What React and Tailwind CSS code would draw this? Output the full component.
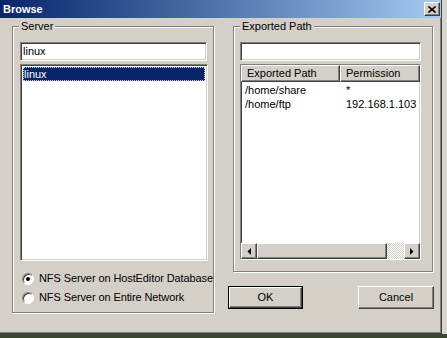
export default function App() {
  const raised =
    "border border-t-white border-l-white border-b-[#404040] border-r-[#404040] shadow-[inset_-1px_-1px_0_#808080] bg-[#d4d0c8]";
  const sunken =
    "border border-t-[#808080] border-l-[#808080] border-b-white border-r-white shadow-[inset_1px_1px_0_#404040,inset_-1px_-1px_0_#d4d0c8]";
  const group =
    "relative border border-[#808080] shadow-[inset_1px_1px_0_#fff,1px_1px_0_#fff]";

  const Radio = ({ checked, label }) => (
    <div className="flex items-center h-[19px] pl-[2px]">
      <div className="relative w-[12px] h-[12px] rounded-full bg-white border border-t-[#808080] border-l-[#808080] border-b-white border-r-white shadow-[inset_1px_1px_0_#404040] flex items-center justify-center">
        {checked && <div className="w-[4px] h-[4px] rounded-full bg-black" />}
      </div>
      <span className="ml-[5px] whitespace-nowrap tracking-[-0.1px]">{label}</span>
    </div>
  );

  const Arrow = ({ dir }) => (
    <svg width="4" height="7" viewBox="0 0 4 7">
      {dir === "left" ? (
        <polygon points="4,0 4,7 0.5,3.5" fill="#000" />
      ) : (
        <polygon points="0,0 0,7 3.5,3.5" fill="#000" />
      )}
    </svg>
  );

  return (
    <div className="w-[447px] h-[338px] flex flex-col bg-[#3b4630] font-['Liberation_Sans',Arial,sans-serif] text-[11px] text-black overflow-hidden">
      <div className="flex h-[334px]">
        <div className="w-[442px] h-full bg-[#d4d0c8] border-r border-b border-r-[#404040] border-b-[#404040] shadow-[inset_-1px_-1px_0_#808080] flex flex-col">
          {/* Title bar */}
          <div className="h-[18px] flex items-center justify-between bg-linear-to-r from-[#0a246a] to-[#a6caf0] pl-[3px] pr-[1px]">
            <span className="text-white font-bold text-[11px]">Browse</span>
            <div className={`${raised} w-[16px] h-[14px] flex items-center justify-center`}>
              <svg width="8" height="7" viewBox="0 0 8 7">
                <path d="M0.5 0.5 L7.5 6.5 M7.5 0.5 L0.5 6.5" stroke="#000" strokeWidth="1.6" />
              </svg>
            </div>
          </div>

          {/* Body */}
          <div className="flex pl-[12px] pt-[8px]">
            {/* Server group */}
            <div className={`${group} w-[202px] h-[287px] pt-[15px] pl-[7px]`}>
              <span className="absolute left-[6px] top-[-7px] px-[2px] bg-[#d4d0c8] leading-[13px]">
                Server
              </span>
              <div className={`${sunken} bg-white w-[187px] h-[19px] flex items-center pl-[2px]`}>
                linux
              </div>
              <div className={`${sunken} bg-white w-[188px] h-[197px] mt-[3px] p-[2px]`}>
                <div className="h-[14px] bg-[#0a246a] text-white flex items-center pl-[1px] outline outline-1 outline-dotted outline-[#d4d0c8] -outline-offset-1">
                  linux
                </div>
              </div>
              <div className="mt-[8px] flex flex-col">
                <Radio checked label="NFS Server on HostEditor Database" />
                <Radio label="NFS Server on Entire Network" />
              </div>
            </div>

            {/* Right column */}
            <div className="ml-[14px] flex flex-col">
              <div className={`${group} ml-[5px] w-[200px] h-[246px] pt-[15px] pl-[6px]`}>
                <span className="absolute left-[6px] top-[-7px] px-[2px] bg-[#d4d0c8] leading-[13px]">
                  Exported Path
                </span>
                <div className={`${sunken} bg-white w-[181px] h-[19px]`} />
                <div className={`${sunken} bg-white w-[181px] h-[196px] mt-[3px] flex flex-col`}>
                  <div className="flex h-[17px]">
                    <div className={`${raised} w-[99px] flex items-center pl-[5px] whitespace-nowrap`}>
                      Exported Path
                    </div>
                    <div className={`${raised} flex-1 flex items-center pl-[5px] whitespace-nowrap`}>
                      Permission
                    </div>
                  </div>
                  <div className="flex-1 flex flex-col">
                    <div className="flex h-[14px] items-center mt-[1px]">
                      <span className="w-[99px] pl-[4px]">/home/share</span>
                      <span className="pl-[6px]">*</span>
                    </div>
                    <div className="flex h-[14px] items-center">
                      <span className="w-[99px] pl-[4px]">/home/ftp</span>
                      <span className="pl-[6px]">192.168.1.103</span>
                    </div>
                  </div>
                  <div className="flex h-[16px]">
                    <div className={`${raised} w-[16px] flex items-center justify-center`}>
                      <Arrow dir="left" />
                    </div>
                    <div className={`${raised} w-[130px]`} />
                    <div className="flex-1 bg-[repeating-conic-gradient(#ffffff_0%_25%,#d4d0c8_0%_50%)] bg-[length:2px_2px]" />
                    <div className={`${raised} w-[16px] flex items-center justify-center`}>
                      <Arrow dir="right" />
                    </div>
                  </div>
                </div>
              </div>

              <div className="flex justify-between mt-[14px] w-[206px]">
                <div className="w-[75px] h-[23px] border border-black">
                  <div className={`${raised} w-full h-full flex items-center justify-center`}>
                    OK
                  </div>
                </div>
                <div className={`${raised} w-[76px] h-[23px] flex items-center justify-center`}>
                  Cancel
                </div>
              </div>
            </div>
          </div>
        </div>
        <div className="flex-1 bg-[#d8d5ce]" />
      </div>
      <div className="flex-1 bg-[#3b4630]" />
    </div>
  );
}
